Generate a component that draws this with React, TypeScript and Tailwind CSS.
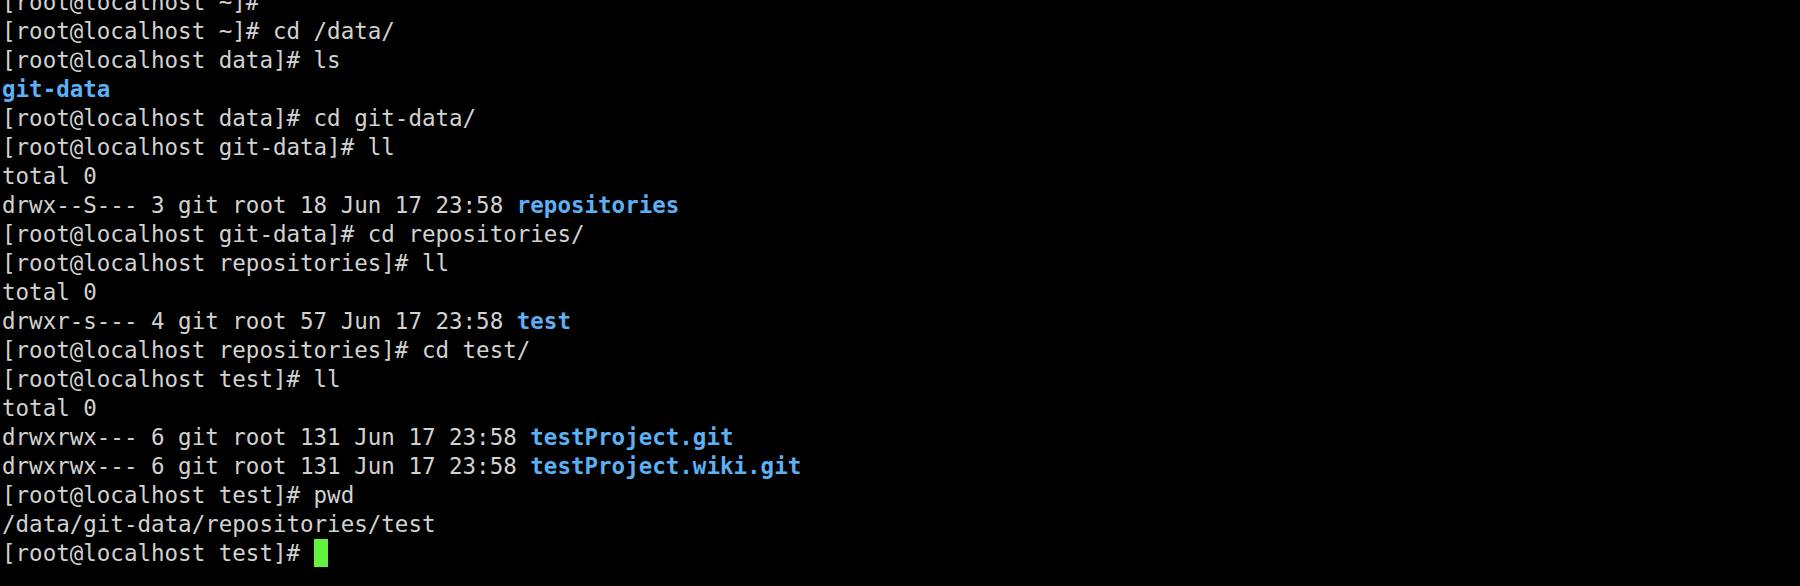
import React from 'react';

type Seg = { text: string; dir?: boolean };
type Line = Seg[];

const p = (t: string): Line => [{ text: t }];

const lines: Line[] = [
  p('[root@localhost ~]#'),
  p('[root@localhost ~]# cd /data/'),
  p('[root@localhost data]# ls'),
  [{ text: 'git-data', dir: true }],
  p('[root@localhost data]# cd git-data/'),
  p('[root@localhost git-data]# ll'),
  p('total 0'),
  [{ text: 'drwx--S--- 3 git root 18 Jun 17 23:58 ' }, { text: 'repositories', dir: true }],
  p('[root@localhost git-data]# cd repositories/'),
  p('[root@localhost repositories]# ll'),
  p('total 0'),
  [{ text: 'drwxr-s--- 4 git root 57 Jun 17 23:58 ' }, { text: 'test', dir: true }],
  p('[root@localhost repositories]# cd test/'),
  p('[root@localhost test]# ll'),
  p('total 0'),
  [{ text: 'drwxrwx--- 6 git root 131 Jun 17 23:58 ' }, { text: 'testProject.git', dir: true }],
  [{ text: 'drwxrwx--- 6 git root 131 Jun 17 23:58 ' }, { text: 'testProject.wiki.git', dir: true }],
  p('[root@localhost test]# pwd'),
  p('/data/git-data/repositories/test'),
];

const App: React.FC = () => {
  return (
    <div
      className="w-[1800px] h-[586px] overflow-hidden bg-black text-[#d2d2d2] text-[22.5px] leading-[29px] whitespace-pre"
      style={{ fontFamily: '"DejaVu Sans Mono", "Liberation Mono", monospace' }}
    >
      <div className="flex flex-col mt-[-12.5px] pl-[2px]">
        {lines.map((line, i) => (
          <div key={i} className="h-[29px]">
            {line.map((s, j) =>
              s.dir ? (
                <span key={j} className="font-bold text-[#5cb0f4]">{s.text}</span>
              ) : (
                <span key={j}>{s.text}</span>
              )
            )}
          </div>
        ))}
        <div className="h-[29px] flex items-center">
          <span>[root@localhost test]# </span>
          <span className="inline-block w-[14px] h-[28px] bg-[#63f23f]"></span>
        </div>
      </div>
    </div>
  );
};

export default App;
